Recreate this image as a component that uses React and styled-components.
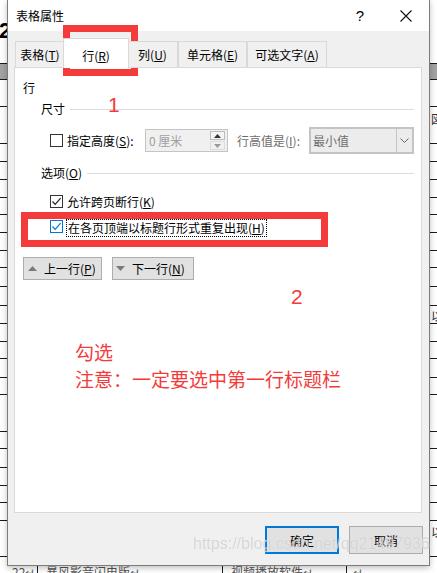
import React from 'react';
import styled, { createGlobalStyle } from 'styled-components';

const UI_FONT = `"Noto Sans CJK SC", "Microsoft YaHei", sans-serif`;

const Global = createGlobalStyle`
  html, body { margin: 0; padding: 0; background: #fff; }
  body { font-family: ${UI_FONT}; font-size: 12px; color: #000; }
  * { box-sizing: border-box; }
`;

const Screen = styled.div`
  position: relative;
  width: 437px;
  height: 573px;
  overflow: hidden;
  background: #fff;
`;

/* ---------- background document ---------- */
const Doc = styled.div`
  display: flex;
  flex-direction: column;
  width: 437px;
`;
const DocRow = styled.div`
  height: ${(p) => p.$h}px;
  flex: none;
  border-top: ${(p) => (p.$line ? '1px solid #1a1a1a' : 'none')};
  background: ${(p) => (p.$gray ? '#a3a3a3' : '#fff')};
  position: relative;
  overflow: hidden;
  white-space: nowrap;
`;
const DocHeading = styled.div`
  font-family: "Liberation Sans", sans-serif;
  font-weight: bold;
  font-size: 22px;
  line-height: 22px;
  padding-top: 20px;
  margin-left: -1px;
`;
const DocTail = styled.div`
  padding-left: 431px;
  padding-top: ${(p) => p.$top || 3}px;
  font-size: 12px;
  color: #333;
  line-height: 14px;
`;
const DocCells = styled.div`
  display: grid;
  grid-template-columns: 37px 185px 124px 1fr;
  height: 100%;
`;
const DocCell = styled.div`
  border-left: ${(p) => (p.$first ? 'none' : '1px solid #1a1a1a')};
  padding: 8px 0 0 ${(p) => p.$pad}px;
  font-size: 12px;
  line-height: 14px;
  color: #555;
`;

/* ---------- dialog ---------- */
const Dialog = styled.div`
  position: absolute;
  left: 7px;
  top: 0;
  width: 423px;
  height: 566px;
  border: 1px solid #7c7c7c;
  border-top: none;
  background: #f0f0f0;
  display: flex;
  flex-direction: column;
  box-shadow: 0 2px 6px rgba(0, 0, 0, 0.25);
`;
const TitleBar = styled.div`
  height: 31px;
  flex: none;
  background: #fff;
  display: flex;
  align-items: center;
  padding-left: 8px;
`;
const Title = styled.div`
  flex: 1;
  font-size: 12px;
`;
const CaptionButton = styled.div`
  width: 46px;
  height: 31px;
  display: flex;
  align-items: center;
  justify-content: center;
  font-family: "Liberation Sans", sans-serif;
  font-size: 15px;
`;
const Body = styled.div`
  flex: 1;
  display: flex;
  flex-direction: column;
  padding: 7px 6px 0 6px;
`;
const TabRow = styled.div`
  display: flex;
  align-items: flex-end;
  height: 30px;
  padding-left: 1px;
  position: relative;
  z-index: 1;
  margin-bottom: -1px;
`;
const Tab = styled.div`
  width: ${(p) => p.$w}px;
  height: ${(p) => (p.$active ? 30 : 27)}px;
  margin: 0 ${(p) => (p.$active ? -2 : 0)}px;
  padding-top: ${(p) => (p.$active ? 3 : 0)}px;
  background: ${(p) => (p.$active ? '#fff' : '#f0f0f0')};
  border: 1px solid #d9d9d9;
  border-bottom: ${(p) => (p.$active ? 'none' : '1px solid #d9d9d9')};
  display: flex;
  align-items: center;
  justify-content: center;
  font-size: 12px;
  position: relative;
  z-index: ${(p) => (p.$active ? 2 : 1)};
`;
const Panel = styled.div`
  height: 446px;
  width: 408px;
  flex: none;
  background: #fff;
  border: 1px solid #d9d9d9;
  padding: 12px 7px 0 8px;
  display: flex;
  flex-direction: column;
`;
const GroupLabel = styled.div`
  line-height: 16px;
  height: 16px;
`;
const SectionHeading = styled.div`
  display: flex;
  align-items: center;
  height: 16px;
  line-height: 16px;
  margin: ${(p) => p.$mt}px 0 0 18px;
  &::after {
    content: '';
    flex: 1;
    height: 1px;
    background: #dcdcdc;
    margin-left: 5px;
  }
`;
const FieldRow = styled.div`
  display: flex;
  align-items: center;
  height: 27px;
  margin: 10px 0 0 27px;
`;
const CheckRow = styled.div`
  display: flex;
  align-items: center;
  height: 18px;
  margin: 11px 0 0 27px;
`;
const Box = styled.span`
  width: 13px;
  height: 13px;
  flex: none;
  border: 1px solid ${(p) => (p.$blue ? '#0078d7' : '#333')};
  background: #fff;
  display: flex;
  align-items: center;
  justify-content: center;
  margin-top: ${(p) => p.$mt || 0}px;
`;
const Label = styled.span`
  margin-left: 4px;
  width: ${(p) => (p.$w ? `${p.$w}px` : 'auto')};
  white-space: nowrap;
  flex: none;
`;
const FocusLabel = styled.span`
  margin-left: 3px;
  border: 1px dotted #000;
  height: 18px;
  line-height: 16px;
  padding: 0 1px;
  white-space: nowrap;
`;
const DimLabel = styled.span`
  margin-left: 9px;
  width: 63px;
  color: #6d6d6d;
  white-space: nowrap;
  flex: none;
`;
const SpinBox = styled.div`
  margin-left: 12px;
  width: 83px;
  height: 23px;
  border: 1px solid #c4c4c4;
  background: #f0f0f0;
  display: flex;
  align-items: center;
  padding: 1px;
  flex: none;
`;
const SpinText = styled.span`
  flex: 1;
  padding-left: 2px;
  color: #a0a0a0;
`;
const SpinButtons = styled.div`
  width: 15px;
  height: 100%;
  display: flex;
  flex-direction: column;
  gap: 1px;
  margin-right: 1px;
`;
const SpinButton = styled.div`
  flex: 1;
  border: 1px solid ${(p) => (p.$dim ? '#dcdcdc' : '#bcbcbc')};
  background: ${(p) => (p.$dim ? '#f0f0f0' : '#f4f4f4')};
  display: flex;
  align-items: center;
  justify-content: center;
`;
const Select = styled.div`
  margin-left: 9px;
  width: 105px;
  height: 27px;
  border: 2px solid #c4c4c4;
  background: #ececec;
  display: flex;
  align-items: stretch;
  flex: none;
`;
const SelectText = styled.span`
  flex: 1;
  display: flex;
  align-items: center;
  padding-left: 2px;
  color: #6d6d6d;
`;
const SelectArrow = styled.span`
  width: 16px;
  border-left: 1px solid #c4c4c4;
  display: flex;
  align-items: center;
  justify-content: center;
`;
const HighlightBox = styled.div`
  margin: 2px 0 0 -2px;
  width: 307px;
  height: 35px;
  border: 7px solid #f43b3b;
  background: #fff;
  padding-left: 22px;
  display: flex;
  align-items: flex-start;
`;
const NavRow = styled.div`
  display: flex;
  gap: 10px;
  margin-top: 10px;
`;
const NavButton = styled.div`
  width: ${(p) => p.$w}px;
  height: 23px;
  border: 1px solid #adadad;
  background: #e1e1e1;
  display: flex;
  align-items: center;
  gap: 7px;
  padding-left: ${(p) => p.$pl}px;
  white-space: nowrap;
  & > svg {
    flex: none;
  }
`;
const NavText = styled.span`
  flex: none;
`;
const Note = styled.div`
  margin: 58px 0 0 52px;
  color: #f43b3b;
  font-size: 19px;
  line-height: 27px;
  white-space: nowrap;
`;
const Footer = styled.div`
  display: flex;
  justify-content: flex-end;
  gap: 10px;
  padding-top: 13px;
`;
const DlgButton = styled.div`
  width: 74px;
  height: 28px;
  background: #e1e1e1;
  border: ${(p) => (p.$primary ? '2px solid #0078d7' : '1px solid #adadad')};
  display: flex;
  align-items: center;
  justify-content: center;
  font-size: 12px;
`;

/* ---------- annotations drawn over the screenshot ---------- */
const AnnotBox = styled.div`
  position: absolute;
  left: ${(p) => p.$x}px;
  top: ${(p) => p.$y}px;
  width: ${(p) => p.$w}px;
  height: ${(p) => p.$h}px;
  border: 7px solid #f43b3b;
  pointer-events: none;
`;
const AnnotNumber = styled.div`
  position: absolute;
  left: ${(p) => p.$x}px;
  top: ${(p) => p.$y}px;
  font-family: "Liberation Sans", sans-serif;
  font-size: 21px;
  line-height: 21px;
  color: #f43b3b;
`;
const Watermark = styled.div`
  position: absolute;
  left: 193px;
  top: 535px;
  font-family: "Liberation Sans", sans-serif;
  font-size: 16px;
  line-height: 18px;
  color: rgba(190, 190, 190, 0.6);
  text-shadow: 0 0 1px rgba(255, 255, 255, 0.8);
  white-space: nowrap;
  pointer-events: none;
`;

const Check = ({ color = '#222' }) => (
  <svg width="11" height="11" viewBox="0 0 11 11">
    <polyline points="1.5,5.5 4.2,8.3 9.6,2.2" fill="none" stroke={color} strokeWidth="1.2" />
  </svg>
);

const Tri = ({ down, color = '#7a7a7a', w = 9, h = 5 }) => (
  <svg width={w} height={h} viewBox={`0 0 ${w} ${h}`}>
    <polygon points={down ? `0,0 ${w},0 ${w / 2},${h}` : `0,${h} ${w},${h} ${w / 2},0`} fill={color} />
  </svg>
);

const lines = [63, 79, 106, 143, 161, 179, 197, 214, 232, 250, 267, 286, 305, 323, 341, 358, 377, 394, 431, 448, 467, 485, 502, 520, 556, 573];
const tails = { 106: { t: '図', top: 5 }, 305: { t: '以', top: 0 }, 520: { t: '以', top: 4 } };

export default function App() {
  const rows = [];
  let prev = 0;
  lines.forEach((y, i) => {
    rows.push({ top: prev, h: y - prev, line: i > 0 });
    prev = y;
  });

  return (
    <Screen>
      <Global />
      <Doc>
        {rows.map((r) => {
          if (r.top === 0)
            return (
              <DocRow key={r.top} $h={r.h}>
                <DocHeading>2</DocHeading>
              </DocRow>
            );
          if (r.top === 556)
            return (
              <DocRow key={r.top} $h={r.h} $line>
                <DocCells>
                  <DocCell $first $pad={12}>22↵</DocCell>
                  <DocCell $pad={8}>暴风影音闪电版↵</DocCell>
                  <DocCell $pad={8}>视频播放软件↵</DocCell>
                  <DocCell $pad={6}>↵</DocCell>
                </DocCells>
              </DocRow>
            );
          const tail = tails[r.top];
          return (
            <DocRow key={r.top} $h={r.h} $line={r.line} $gray={r.top === 63}>
              {tail && <DocTail $top={tail.top}>{tail.t}</DocTail>}
            </DocRow>
          );
        })}
      </Doc>

      <Dialog>
        <TitleBar>
          <Title>表格属性</Title>
          <CaptionButton>?</CaptionButton>
          <CaptionButton>
            <svg width="12" height="12" viewBox="0 0 12 12">
              <path d="M0.5 0.5 L11.5 11.5 M11.5 0.5 L0.5 11.5" stroke="#111" strokeWidth="1.1" />
            </svg>
          </CaptionButton>
        </TitleBar>
        <Body>
          <TabRow>
            <Tab $w={50}>表格(<u>T</u>)</Tab>
            <Tab $w={66} $active>行(<u>R</u>)</Tab>
            <Tab $w={51}>列(<u>U</u>)</Tab>
            <Tab $w={69}>单元格(<u>E</u>)</Tab>
            <Tab $w={80}>可选文字(<u>A</u>)</Tab>
          </TabRow>
          <Panel>
            <GroupLabel>行</GroupLabel>
            <SectionHeading $mt={5}>尺寸</SectionHeading>
            <FieldRow>
              <Box />
              <Label $w={66}>指定高度(<u>S</u>):</Label>
              <SpinBox>
                <SpinText>0 厘米</SpinText>
                <SpinButtons>
                  <SpinButton>
                    <Tri color="#333" w={7} h={4} />
                  </SpinButton>
                  <SpinButton $dim>
                    <Tri down color="#9a9a9a" w={7} h={4} />
                  </SpinButton>
                </SpinButtons>
              </SpinBox>
              <DimLabel>行高值是(<u>I</u>):</DimLabel>
              <Select>
                <SelectText>最小值</SelectText>
                <SelectArrow>
                  <svg width="9" height="5" viewBox="0 0 9 5">
                    <polyline points="0.5,0.5 4.5,4.5 8.5,0.5" fill="none" stroke="#666" strokeWidth="1" />
                  </svg>
                </SelectArrow>
              </Select>
            </FieldRow>
            <SectionHeading $mt={11}>选项(<u>O</u>)</SectionHeading>
            <CheckRow>
              <Box>
                <Check />
              </Box>
              <Label>允许跨页断行(<u>K</u>)</Label>
            </CheckRow>
            <HighlightBox>
              <Box $blue $mt={1}>
                <Check color="#0078d7" />
              </Box>
              <FocusLabel>在各页顶端以标题行形式重复出现(<u>H</u>)</FocusLabel>
            </HighlightBox>
            <NavRow>
              <NavButton $w={79} $pl={4}>
                <Tri />
                <NavText>上一行(<u>P</u>)</NavText>
              </NavButton>
              <NavButton $w={82} $pl={3}>
                <Tri down />
                <NavText>下一行(<u>N</u>)</NavText>
              </NavButton>
            </NavRow>
            <Note>
              勾选
              <br />
              注意：一定要选中第一行标题栏
            </Note>
          </Panel>
          <Footer>
            <DlgButton $primary>确定</DlgButton>
            <DlgButton>取消</DlgButton>
          </Footer>
        </Body>
      </Dialog>

      <AnnotBox $x={63} $y={25} $w={75} $h={51} />
      <AnnotNumber $x={108} $y={94}>1</AnnotNumber>
      <AnnotNumber $x={291} $y={286}>2</AnnotNumber>
      <Watermark>https://blog.csdn.net/qq21497936</Watermark>
    </Screen>
  );
}
